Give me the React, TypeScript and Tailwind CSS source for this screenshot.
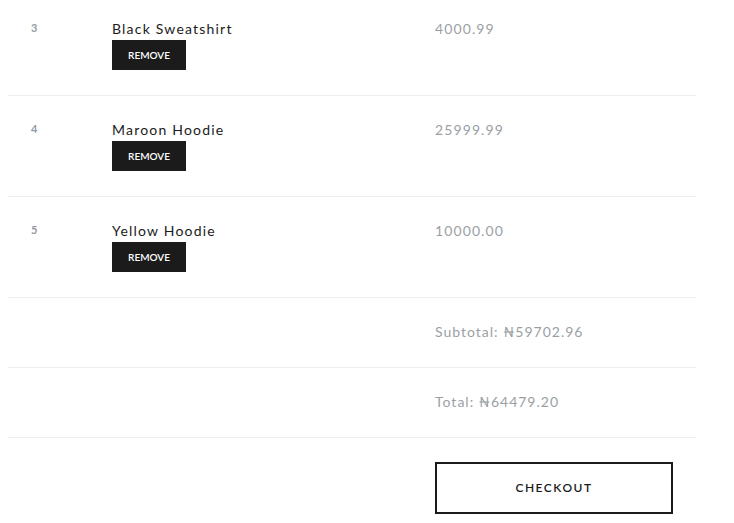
const items = [
  { id: 3, name: 'Black Sweatshirt', price: '4000.99' },
  { id: 4, name: 'Maroon Hoodie', price: '25999.99' },
  { id: 5, name: 'Yellow Hoodie', price: '10000.00' },
];

const font = { fontFamily: 'Lato, "Open Sans", "DejaVu Sans", sans-serif' };

export default function App() {
  return (
    <div className="w-[734px] h-[523px] overflow-hidden bg-white" style={font}>
      <div className="ml-2 w-[688px] -mt-[6px]">
        {items.map((item) => (
          <div key={item.id} className="grid grid-cols-[80px_323px_1fr] border-t border-[#eeeeee] h-[101px]">
            <div className="pl-[23px] pt-[27px] text-[11px] font-bold leading-none text-[#959ba2]">{item.id}</div>
            <div className="pl-6 pt-[24px]">
              <div className="text-[14px] leading-[20px] tracking-[1.2px] text-[#1b1b1b]">{item.name}</div>
              <button className="mt-px w-[74px] h-[30px] bg-[#1b1b1b] text-white text-[10px] font-semibold leading-none">
                REMOVE
              </button>
            </div>
            <div className="pl-6 pt-[24px] text-[14px] leading-[20px] tracking-[1.1px] text-[#9a9fa5]">{item.price}</div>
          </div>
        ))}
        <div className="grid grid-cols-[80px_323px_1fr] border-t border-[#eeeeee] h-[70px]">
          <div />
          <div />
          <div className="pl-6 pt-[24px] text-[14px] leading-[20px] tracking-[1px] text-[#9a9fa5]">Subtotal: ₦59702.96</div>
        </div>
        <div className="grid grid-cols-[80px_323px_1fr] border-t border-[#eeeeee] h-[70px]">
          <div />
          <div />
          <div className="pl-6 pt-[24px] text-[14px] leading-[20px] tracking-[1px] text-[#9a9fa5]">Total: ₦64479.20</div>
        </div>
        <div className="grid grid-cols-[80px_323px_1fr] border-t border-[#eeeeee]">
          <div />
          <div />
          <div className="pl-6 pt-6">
            <button className="w-[238px] h-[52px] border-2 border-[#1b1b1b] bg-white text-[12px] font-semibold tracking-[1.5px] text-[#1b1b1b]">
              CHECKOUT
            </button>
          </div>
        </div>
      </div>
    </div>
  );
}
